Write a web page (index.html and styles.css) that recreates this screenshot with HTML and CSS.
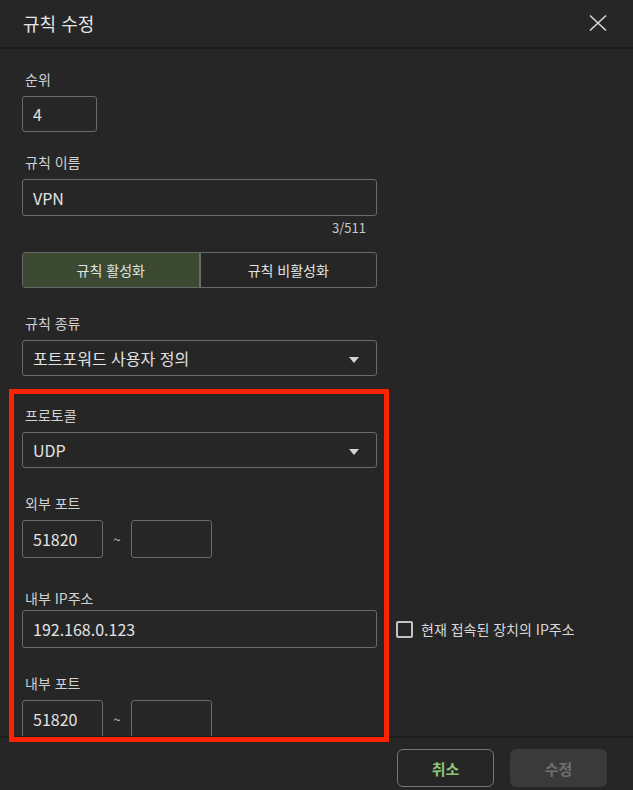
FILE: index.html
```html
<!DOCTYPE html>
<html lang="ko">
<head>
  <meta charset="UTF-8">
  <meta name="viewport" content="width=device-width, initial-scale=1.0">
  <title>규칙 수정</title>
  <link rel="stylesheet" href="styles.css">
</head>
<body>
  <div class="dialog">
    <!-- Header -->
    <div class="dialog-header">
      <span class="dialog-title">규칙 수정</span>
      <button class="close-btn" aria-label="닫기">
        <svg width="18" height="18" viewBox="0 0 18 18">
          <path d="M1 1.5 L17 16.5 M17 1.5 L1 16.5" stroke="#d8d8d8" stroke-width="1.6" fill="none"/>
        </svg>
      </button>
    </div>

    <!-- Body -->
    <div class="dialog-body">
      <div class="field first">
        <div class="label">순위</div>
        <div class="input small">4</div>
      </div>

      <div class="field">
        <div class="label">규칙 이름</div>
        <div class="input tall">VPN</div>
        <div class="counter">3/511</div>
      </div>

      <div class="toggle">
        <div class="toggle-item active">규칙 활성화</div>
        <div class="toggle-item">규칙 비활성화</div>
      </div>

      <div class="field gap-lg">
        <div class="label">규칙 종류</div>
        <div class="input select">포트포워드 사용자 정의<span class="caret"></span></div>
      </div>

      <div class="field gap-xl">
        <div class="label">프로토콜</div>
        <div class="input select">UDP<span class="caret"></span></div>
      </div>

      <div class="field gap-lg">
        <div class="label">외부 포트</div>
        <div class="port-row">
          <div class="input port">51820</div>
          <span class="tilde">~</span>
          <div class="input port"></div>
        </div>
      </div>

      <div class="field gap-xxl">
        <div class="label tight">내부 IP주소</div>
        <div class="ip-row">
          <div class="input ip">192.168.0.123</div>
          <label class="check">
            <span class="check-box"></span>
            <span>현재 접속된 장치의 IP주소</span>
          </label>
        </div>
      </div>

      <div class="field gap-lg">
        <div class="label">내부 포트</div>
        <div class="port-row">
          <div class="input port">51820</div>
          <span class="tilde">~</span>
          <div class="input port"></div>
        </div>
      </div>
    </div>

    <!-- Footer -->
    <div class="dialog-footer">
      <button class="btn cancel">취소</button>
      <button class="btn submit" disabled>수정</button>
    </div>

    <!-- highlight annotation -->
    <div class="highlight"></div>
  </div>
</body>
</html>
```

FILE: styles.css
```css
body {
  margin: 0;
  background: #262626;
  font-family: "Noto Sans CJK KR", "Noto Sans", sans-serif;
  color: #d6d6d6;
}
.dialog {
  position: relative;
  width: 633px;
  height: 790px;
  background: #262626;
  overflow: hidden;
}
.dialog-header {
  height: 47px;
  display: flex;
  align-items: center;
  justify-content: space-between;
  padding: 0 26px 0 23px;
  border-bottom: 2px solid #1c1c1c;
}
.dialog-title {
  font-size: 18px;
  color: #e4e4e4;
  margin-top: -2px;
}
.close-btn {
  background: none;
  border: none;
  padding: 0;
  width: 18px;
  height: 18px;
  margin-top: -2px;
  cursor: pointer;
}
.close-btn svg {
  display: block;
}
.dialog-body {
  height: 687px;
  padding: 0 22px;
  overflow: hidden;
}
.field {
  margin-top: 20px;
}
.field.gap-lg {
  margin-top: 25px;
}
.field.gap-xl {
  margin-top: 29px;
}
.field.gap-xxl {
  margin-top: 30px;
}
.label {
  font-size: 14px;
  line-height: 20px;
  color: #d2d2d2;
  margin-bottom: 7px;
  padding-left: 3px;
}
.label.tight {
  margin-bottom: 2px;
}
.input {
  box-sizing: border-box;
  height: 36px;
  width: 355px;
  border: 1.5px solid #6a6a6a;
  border-radius: 3px;
  padding: 0 10px;
  display: flex;
  align-items: center;
  font-size: 16px;
  color: #e2e2e2;
}
.input.small {
  width: 75px;
}
.input.tall {
  height: 37px;
}
.input.select {
  position: relative;
}
.caret {
  position: absolute;
  right: 17px;
  top: 16px;
  width: 0;
  height: 0;
  border-left: 5px solid transparent;
  border-right: 5px solid transparent;
  border-top: 6px solid #d4d4d4;
}
.counter {
  width: 344px;
  text-align: right;
  font-size: 13px;
  line-height: 16px;
  margin-top: 4px;
  color: #c4cacc;
}
.toggle {
  display: flex;
  width: 355px;
  height: 36px;
  box-sizing: border-box;
  margin-top: 16px;
  border: 1.5px solid #686868;
  border-radius: 3px;
  overflow: hidden;
}
.toggle-item {
  flex: 1;
  display: flex;
  align-items: center;
  justify-content: center;
  font-size: 14px;
  color: #e2e2e2;
}
.toggle-item.active {
  background: #3c4a34;
  border-right: 2px solid #67705f;
}
.port-row {
  display: flex;
  align-items: center;
  height: 38px;
}
.input.port {
  width: 81px;
  height: 38px;
}
.tilde {
  width: 28px;
  text-align: center;
  font-size: 13px;
  color: #c8c8c8;
}
.ip-row {
  display: flex;
  align-items: center;
}
.input.ip {
  height: 38px;
}
.check {
  display: flex;
  align-items: center;
  margin-left: 19px;
  font-size: 14px;
  color: #d8d8d8;
}
.check-box {
  box-sizing: border-box;
  width: 17px;
  height: 17px;
  border: 2px solid #c4c4c4;
  border-radius: 2px;
  margin-right: 8px;
}
.dialog-footer {
  height: 52px;
  border-top: 2px solid #1c1c1c;
  display: flex;
  justify-content: flex-end;
  align-items: flex-start;
  padding: 11px 26px 0 0;
  gap: 16px;
}
.btn {
  width: 97px;
  height: 38px;
  border-radius: 6px;
  font-family: inherit;
  font-size: 15px;
  font-weight: bold;
}
.btn.cancel {
  background: transparent;
  border: 1.5px solid #777;
  color: #8cc47a;
}
.btn.submit {
  background: #3a3a3a;
  border: none;
  color: #6e6e6e;
}
/* red annotation frame */
.highlight {
  position: absolute;
  left: 9px;
  top: 389px;
  width: 370px;
  height: 343px;
  border: 5px solid #ff2200;
  pointer-events: none;
}
```
